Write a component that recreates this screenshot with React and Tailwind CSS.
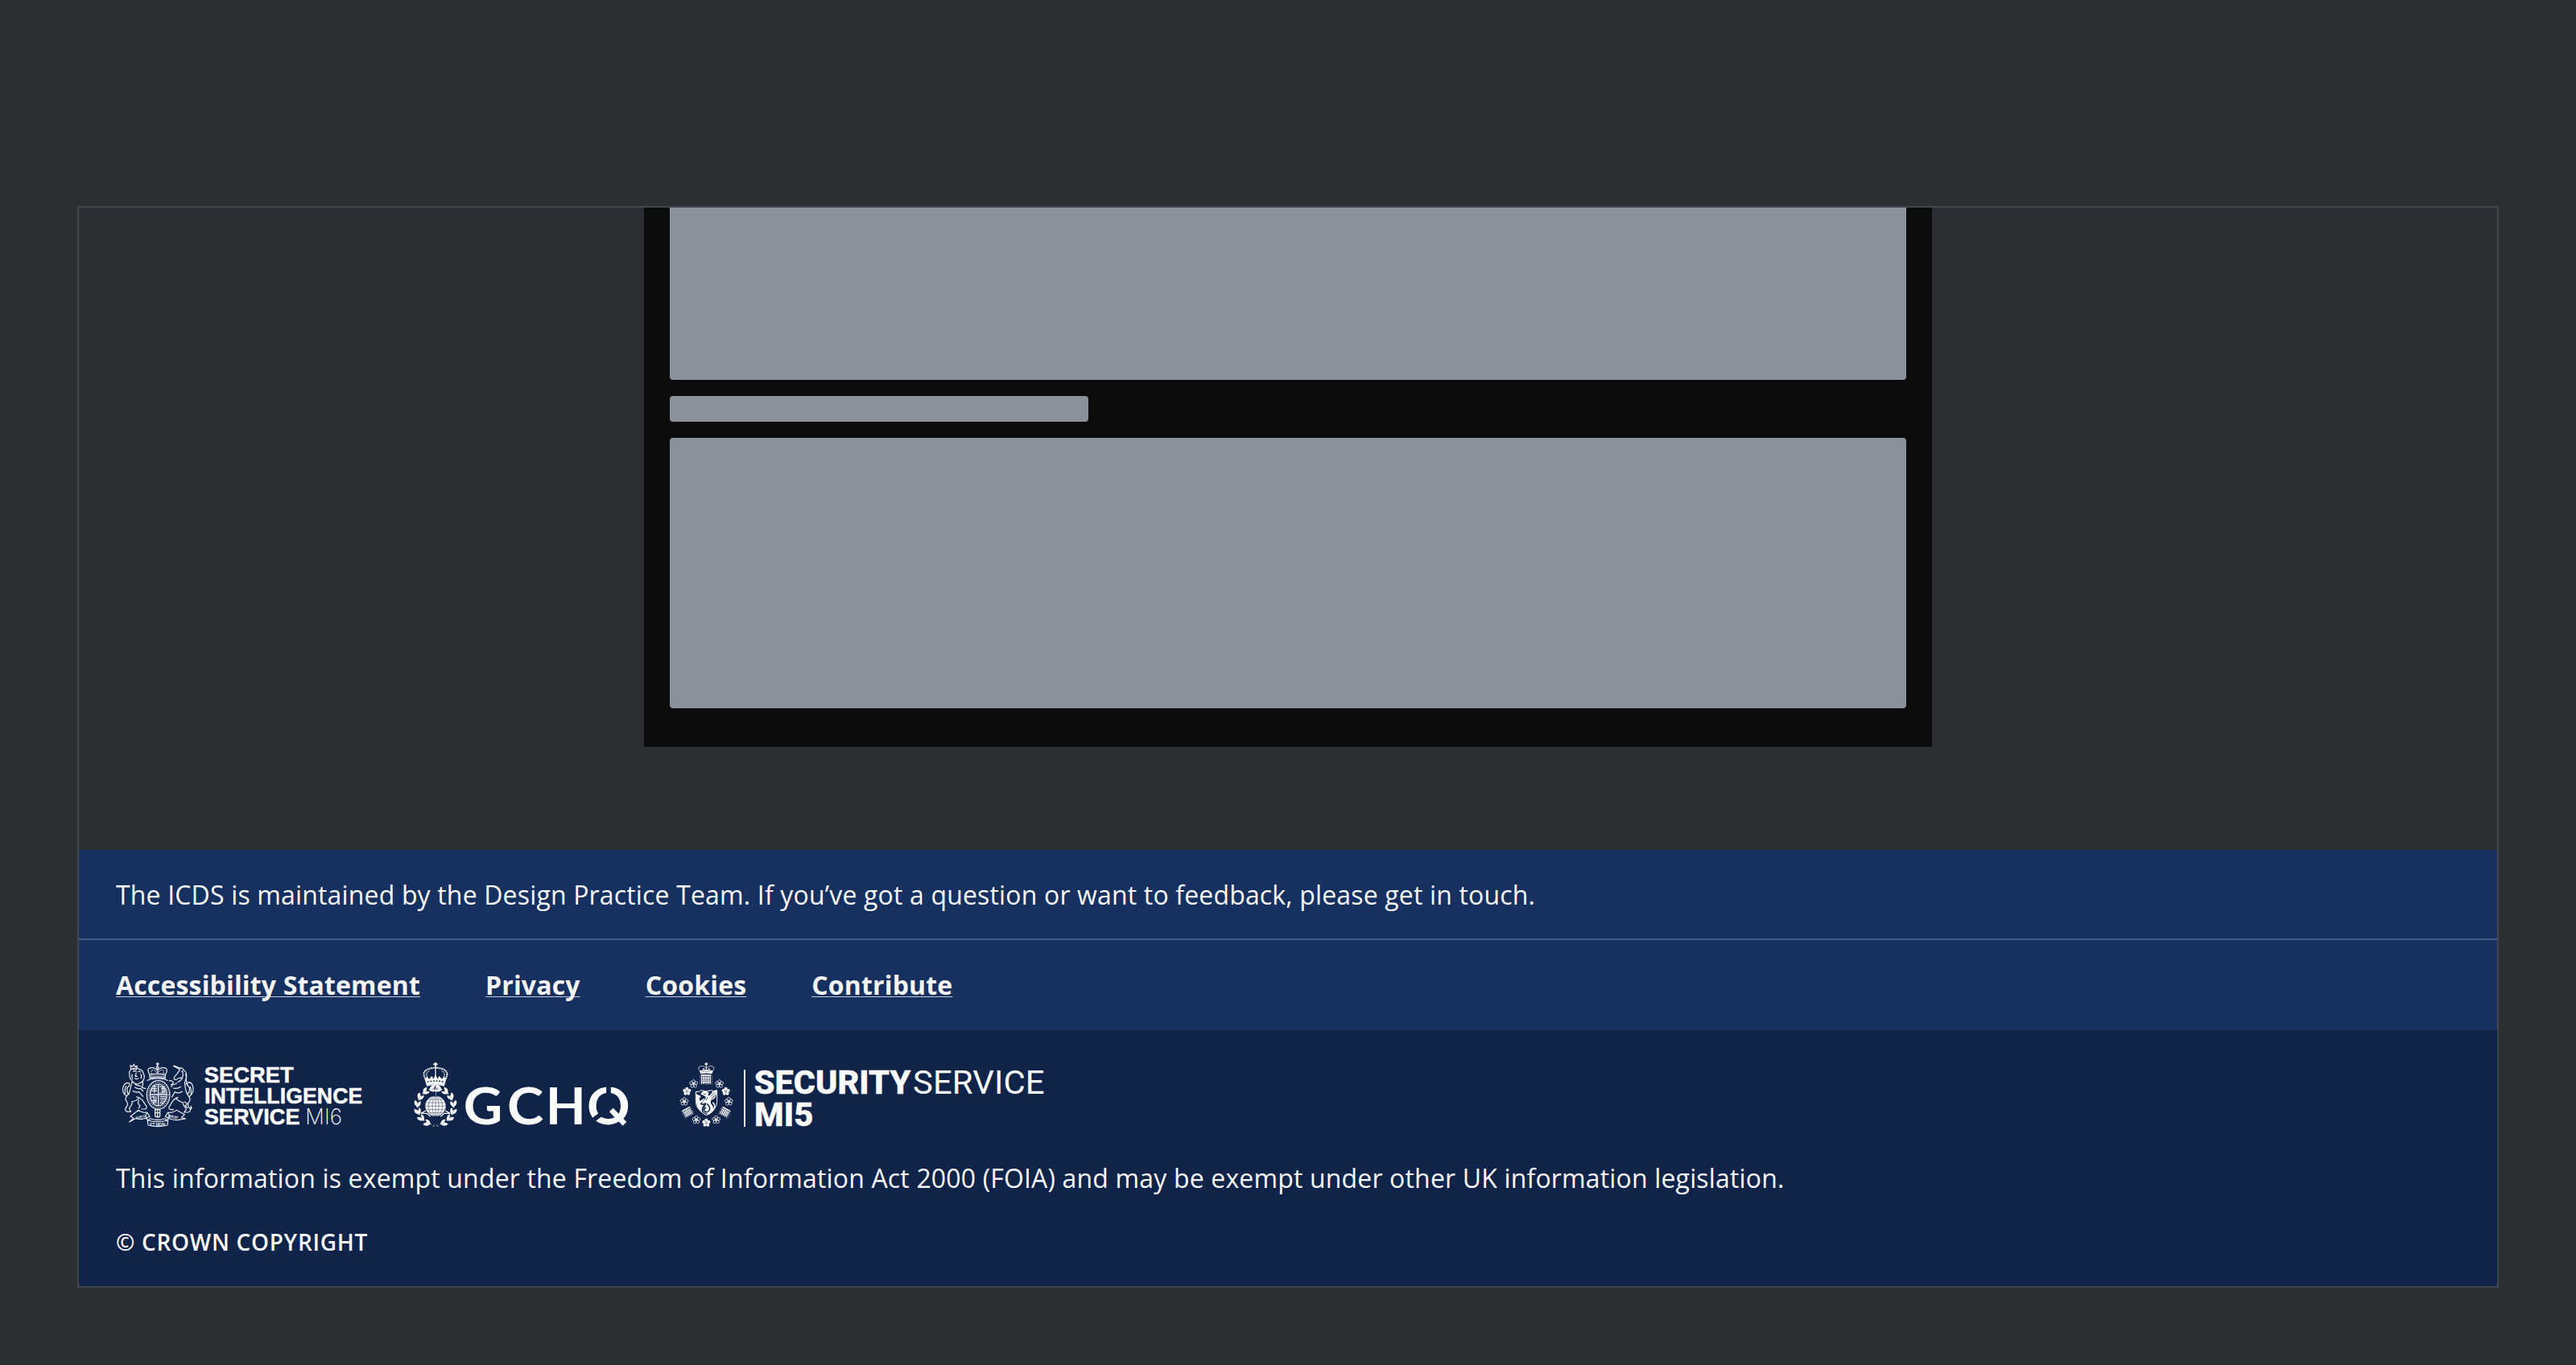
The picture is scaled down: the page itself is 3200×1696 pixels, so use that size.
import React from "react";

const INK = "#fbfcfc";
const NAVY = "#102349";

const LINKS = ["Accessibility Statement", "Privacy", "Cookies", "Contribute"];

/* Left supporter and its scroll of the royal arms; the lion faces the shield. */
function Lion() {
  return (
    <g>
      <path d="M98 84 L96 71 L103 76 L109 67 L113 76 L121 73 L118 87 Z" />
      <path d="M98 86 q-8 8 -5 20 q-2 12 8 20 q2 10 12 12 q10 8 18 -2 q12 -2 14 -12 q6 -12 0 -20 q-2 -14 -14 -18 q-16 -10 -33 0 Z" />
      <path d="M105 95 q8 -6 14 0 M124 95 q6 -4 10 2 M118 98 l-4 14 h9 M112 119 q8 6 15 -1 M103 104 q-4 10 2 18 M134 103 q6 8 1 18" />
      <path d="M104 130 q-6 12 -8 28 q-2 16 -14 28 q-8 10 0 20 q8 10 -2 22 q-8 10 4 16 h14 q-6 -8 -6 -14 q12 -12 10 -24 q18 -2 26 -14" />
      <path d="M112 140 q12 10 24 8 M140 128 q6 14 -2 26 l16 4 M112 152 q12 8 22 6 l10 10 M104 166 q12 8 24 4 l16 18 M118 188 q14 4 22 12 l16 24 q2 10 -8 10 h-12 M128 200 q-8 12 4 22 l-6 10" />
      <path d="M84 186 q-18 -8 -16 -28 q2 -18 16 -22 q12 0 8 12 q-10 2 -8 16 q0 12 8 16 M76 178 q-2 -16 4 -30" />
    </g>
  );
}

function Unicorn() {
  return (
    <g>
      <path d="M255 73 L280 86 M258 72 L283 82" />
      <path d="M281 82 q10 -4 12 6 q12 6 12 22 q0 14 -6 24 M281 84 q-4 10 -12 20 q-12 12 -10 18 q8 6 14 -2 q10 -4 18 -2 M284 94 h3 M290 90 q4 16 0 28 q-6 12 -18 16" />
      <path d="M298 134 q2 16 4 28 q4 16 12 26 q8 10 0 20 q-8 10 2 22 q8 10 -4 16 h-16 q8 -6 8 -14 q-12 -10 -12 -22 q-14 -4 -26 -14" />
      <path d="M300 104 q8 10 2 20 q8 10 0 18 M270 136 q-10 10 -24 6 M240 130 q8 -6 16 4 l-8 18 M284 150 q-12 10 -30 6 M290 168 q-14 10 -28 2 l-12 20 M274 190 q-14 4 -20 14 l-14 22 q-2 10 8 10 h10" />
      <path d="M314 188 q18 -12 16 -32 q-2 -18 -14 -22 q-10 2 -8 12 q10 4 8 18 q0 10 -8 14 M322 180 q2 -16 -3 -30" />
      <path d="M296 206 l12 8 l-8 8 l10 8 M322 222 v14 M316 230 h10" />
    </g>
  );
}

function MI6Logo() {
  return (
    <svg className="h-20 w-[308px] overflow-visible" viewBox="42 60 924 240" aria-label="Secret Intelligence Service MI6">
      <g fill="none" stroke="#e9edf2" strokeWidth="3.6" strokeLinejoin="round">
        <Lion />
        <Unicorn />
        {/* crown */}
        <g>
          <path d="M197 60 v14 M191 66 h12" strokeWidth="4" />
          <circle cx="197" cy="78" r="4" />
          <path d="M168 106 q-14 -22 4 -26 q16 -2 25 10 q9 -12 25 -10 q18 4 4 26" />
          <path d="M176 104 q-6 -14 4 -16 q12 2 17 14 q5 -12 17 -14 q10 2 4 16 M197 84 v20" strokeDasharray="4 3" />
          <path d="M168 106 q29 -8 58 0 v14 q-29 -7 -58 0 Z" fill="#e6eaf0" fillOpacity=".3" />
          <path d="M172 114 h50" strokeDasharray="5 4" />
          <path d="M158 128 q14 -8 39 -8 q25 0 39 8" />
        </g>
        {/* garter and quartered shield */}
        <ellipse cx="200" cy="181" rx="43" ry="53" />
        <ellipse cx="200" cy="181" rx="37" ry="46" strokeWidth="5" strokeDasharray="3 5" opacity=".75" />
        <ellipse cx="200" cy="181" rx="31" ry="40" fill="#e6eaf0" fillOpacity=".15" />
        <path d="M200 141 v80 M169 180 h62" strokeWidth="4" />
        <path d="M175 158 h20 M174 166 h21 M178 150 h17 M186 146 v28 M205 150 l18 2 v22 h-18 M210 158 h12 M212 168 h10 M216 150 v24" />
        <path d="M174 190 q10 -6 10 6 t10 8 M184 186 v28 M176 202 h18 M191 186 v28 M207 188 h20 M207 196 h20 M208 204 h16 M206 211 h12" />
        <path d="M188 236 h18 v24 q-9 8 -18 0 Z M188 248 h18 M197 238 v24" strokeWidth="4" />
        {/* motto scroll */}
        <path d="M92 282 L108 268 L96 262 L126 238 Q140 250 158 246 L168 262 Q140 278 118 268 Z" />
        <path d="M302 270 L286 266 L298 254 L268 238 Q254 250 236 246 L226 262 Q252 278 276 274 Z" />
        <path d="M158 248 q-10 12 0 24 q8 6 12 -4 M236 248 q10 12 0 24 q-8 6 -12 -4" />
        <path d="M160 276 q37 10 76 0 l-2 18 q-37 10 -72 0 Z M170 270 q28 8 54 0" />
      </g>
      <g fill="#e6eaf0" fontFamily="Liberation Sans, sans-serif" fontWeight="700">
        <text x="168" y="296" fontSize="16" textLength="58">ET MON</text>
        <text x="118" y="272" fontSize="14" textLength="36" transform="rotate(-14 118 272)">DIEU</text>
        <text x="236" y="264" fontSize="14" textLength="38" transform="rotate(12 236 264)">DROIT</text>
      </g>
      <g fill={INK} stroke={INK} strokeWidth="1.5" fontFamily="Liberation Sans, Arial, sans-serif" fontWeight="700" fontSize="82">
        <text x="371" y="134" textLength="333" lengthAdjust="spacingAndGlyphs">SECRET</text>
        <text x="372" y="213" textLength="589" lengthAdjust="spacingAndGlyphs">INTELLIGENCE</text>
        <text x="371" y="290" textLength="357" lengthAdjust="spacingAndGlyphs">SERVICE</text>
      </g>
      <text x="748" y="290" fill={INK} fontFamily="Inter, sans-serif" fontWeight="200" fontSize="80" textLength="137" lengthAdjust="spacingAndGlyphs">MI6</text>
    </svg>
  );
}

const LEAF_ANGLES = [12, 36, 60, 84, 108, 132, 156];

function GCHQLogo() {
  return (
    <svg className="h-20 w-[272px] overflow-visible" viewBox="66 60 816 240" aria-label="GCHQ">
      {/* imperial crown */}
      <g fill="none" stroke={INK} strokeWidth="4">
        <path d="M153 60 v16 M145 67 h16" strokeWidth="6" />
        <path d="M153 76 v40" strokeWidth="5" strokeDasharray="4 2" />
        <path d="M116 122 q-16 -26 8 -36 q14 -6 29 -6 q15 0 29 6 q24 10 8 36" strokeWidth="6" strokeDasharray="5 2" />
        <path d="M122 116 q-8 -18 8 -24 M184 116 q8 -18 -8 -24" strokeWidth="2.5" />
        <path d="M114 122 l8 -8 l7 10 l10 -12 l6 12 l8 -16 l8 16 l6 -12 l10 12 l7 -10 l8 8 l-6 22 q-33 -8 -66 0 Z" fill={INK} strokeWidth="2" />
        <path d="M122 133 q31 -8 62 0" stroke={NAVY} strokeWidth="4" strokeDasharray="6 5" />
        <path d="M120 147 q33 -8 66 0" strokeWidth="4" />
      </g>
      {/* laurel wreath */}
      {[1, -1].map((side) => (
        <g key={side} transform={`translate(153 225) scale(${side} 1)`} fill={INK}>
          {LEAF_ANGLES.map((a) => (
            <g key={a} transform={`rotate(${a}) translate(0 -67) scale(1.2)`}>
              <path d="M7 -1 Q-2 -16 -14 -9 Q-8 2 7 -1 Z" />
              <path d="M9 0 Q-2 -3 -13 7 Q-2 14 9 0 Z" />
              <path d="M10 0 L-8 0" stroke={INK} strokeWidth="2" />
            </g>
          ))}
          <path d="M2 66 l10 8 l-6 -1 Z" />
        </g>
      ))}
      {/* lightning and globe */}
      <path d="M155 150 l-6 18 l6 -3 l-3 24 l7 -28 l-6 3 l6 -14 Z" fill={INK} />
      <path d="M117 240 L98 250 L120 250 L134 262 M189 240 L208 250 L186 250 L172 262" fill="none" stroke={INK} strokeWidth="4" />
      <circle cx="153" cy="223" r="38" fill={INK} />
      <g fill="none" stroke={NAVY} strokeWidth="2" opacity=".7">
        <ellipse cx="153" cy="223" rx="12" ry="37" />
        <ellipse cx="153" cy="223" rx="26" ry="37" />
        <path d="M153 186 v74 M116 223 h74 M119 210 h68 M126 198 h54 M119 236 h68 M126 248 h54" />
      </g>
      <g fill={INK} fontFamily="Lato, sans-serif" fontWeight="700" fontSize="192">
        <text x="257" y="291" textLength="146" lengthAdjust="spacingAndGlyphs">G</text>
        <text x="420" y="291" textLength="136" lengthAdjust="spacingAndGlyphs">C</text>
        <text x="564" y="291" textLength="149" lengthAdjust="spacingAndGlyphs">H</text>
        <text x="717" y="291" textLength="161" lengthAdjust="spacingAndGlyphs">Q</text>
      </g>
      {/* breaks in the Q ring and its straight tail */}
      <path d="M762 294 Q798 300 834 282 L884 258 V336 H762 Z" fill={NAVY} />
      <path d="M798 144 V182 M728 284 L772 252" stroke={NAVY} strokeWidth="17" />
      <path d="M808 237 L858 289" stroke={INK} strokeWidth="20" />
    </svg>
  );
}

function Rose({ x, y, solid }) {
  return (
    <g transform={`translate(${x} ${y})`}>
      {[0, 72, 144, 216, 288].map((a) => (
        <circle
          key={a}
          cx="0"
          cy="-9.5"
          r={solid ? 6 : 5.5}
          transform={`rotate(${a})`}
          fill={solid ? INK : "none"}
          stroke={INK}
          strokeWidth={solid ? 0 : 2.2}
        />
      ))}
      <circle r={solid ? 3 : 4} fill={INK} />
    </g>
  );
}

function Portcullis({ x, y, angle = 0, scale = 1 }) {
  return (
    <g transform={`translate(${x} ${y}) rotate(${angle}) scale(${scale})`} fill="none" stroke={INK} strokeWidth="3.4">
      <path d="M-19 -16 H19" strokeWidth="5" />
      <path d="M-16 -16 V18 M-8 -16 V18 M0 -16 V18 M8 -16 V18 M16 -16 V18 M-17 -6 H17 M-17 2 H17 M-17 10 H17" />
      <path d="M-22 -14 V18 M22 -14 V18" strokeWidth="2" strokeDasharray="3 3" />
    </g>
  );
}

function MI5Logo() {
  return (
    <svg className="h-20 w-[454px] overflow-visible" viewBox="72 60 1362 240" aria-label="Security Service MI5">
      <g fill="none" stroke={INK} strokeWidth="3">
        <path d="M172 60 v13 M166 66 h12" strokeWidth="4" />
        <path d="M150 94 q-14 -16 2 -20 q12 -2 20 8 q8 -10 20 -8 q16 4 2 20" strokeDasharray="5 1.5" />
        <path d="M172 74 v18 M158 88 l4 -6 l4 8 M186 88 l-4 -6 l-4 8" />
        <path d="M149 92 q23 -6 46 0 l-2 9 q-21 -4 -42 0 Z" fill={INK} />
        <path d="M154 96 q18 -4 36 0" stroke={NAVY} strokeWidth="2" strokeDasharray="4 3" />
      </g>
      <Portcullis x={171} y={124} />
      <Rose x={125} y={140} />
      <Rose x={221} y={140} />
      <Rose x={100} y={168} solid />
      <Rose x={245} y={168} solid />
      <Rose x={90} y={206} />
      <Rose x={256} y={206} />
      <Portcullis x={103} y={246} angle={-28} scale={0.85} />
      <Portcullis x={241} y={246} angle={28} scale={0.85} />
      <Rose x={135} y={274} />
      <Rose x={209} y={274} />
      <Rose x={172} y={285} solid />
      {/* shield with winged sea lion */}
      <path d="M133 170 Q146 172 152 164 Q172 172 190 164 Q200 170 212 164 V206 Q212 236 172 257 Q133 236 133 206 Z" fill="none" stroke={INK} strokeWidth="3" />
      <path d="M135 178 l18 8 q-8 6 -6 16 l14 4 l-12 8 q4 8 14 4 q-14 16 -4 30 q4 6 12 8 Q136 236 135 206 Z" fill={INK} />
      <path d="M150 178 q8 -14 22 -10 l10 4 l-4 12 q12 -2 16 -14 l16 -8 q2 22 -8 34 l-12 4 q-4 12 4 20 q10 16 -4 28 q-16 10 -28 -4 q-4 -12 6 -20 q6 -8 2 -14 l-14 6 l4 -10 l-10 -2 l10 -8 l10 -2 l-2 -8 Z" fill={INK} />
      <path d="M190 186 l14 -14 M192 194 l14 -12 M196 200 l12 -8 M162 178 h8 M176 190 l-4 12 M168 196 l-8 6" stroke={NAVY} strokeWidth="2.5" />
      <path d="M174 214 q14 10 10 24 q-8 12 -18 4 q-6 -10 6 -14" fill="none" stroke={NAVY} strokeWidth="4.5" />
      <path d="M196 210 q10 6 6 22 q-10 16 -26 22" fill="none" stroke={INK} strokeWidth="5" />
      <rect x="312" y="88" width="6" height="212" fill={INK} />
      <g fill={INK} fontFamily="Roboto, sans-serif" fontSize="120">
        <text x="350" y="177" fontWeight="800" stroke={INK} strokeWidth="1.5" textLength="584" lengthAdjust="spacingAndGlyphs">SECURITY</text>
        <text x="942" y="177" fontWeight="400" textLength="491" lengthAdjust="spacingAndGlyphs">SERVICE</text>
        <text x="351" y="297" fontWeight="800" stroke={INK} strokeWidth="1.5" textLength="220" lengthAdjust="spacingAndGlyphs">MI5</text>
      </g>
    </svg>
  );
}

function Footer() {
  return (
    <footer className="text-[32px] leading-[48px] tracking-[0.16px] text-[#f8f9fa]">
      <div className="flex h-28 items-center border-b-2 border-[#455a82] bg-[#16305f] px-[46px] pt-0.5">
        <p>The ICDS is maintained by the Design Practice Team. If you’ve got a question or want to feedback, please get in touch.</p>
      </div>
      <nav className="flex h-28 items-center gap-[81px] bg-[#16305f] px-[46px] font-bold text-[#f4f4f5]">
        {LINKS.map((label) => (
          <a key={label} href="#" className="underline decoration-[#c3c8d2] decoration-1 underline-offset-[2px] [text-decoration-skip-ink:none]">
            {label}
          </a>
        ))}
      </nav>
      <div className="flex h-[318px] flex-col bg-[#102349] px-[46px] pt-10">
        <div className="flex items-center gap-[60px]">
          <MI6Logo />
          <GCHQLogo />
          <MI5Logo />
        </div>
        <p className="mt-10">
          This information is exempt under the Freedom of Information Act 2000 (FOIA) and may be exempt under other UK information legislation.
        </p>
        <p className="mt-8 text-[28px] leading-[46px] font-semibold tracking-[0.7px]">© CROWN COPYRIGHT</p>
      </div>
    </footer>
  );
}

export default function App() {
  return (
    <div className="h-[1696px] w-[3200px] bg-[#2c2f34] px-24 pt-64 font-['Open_Sans',sans-serif]">
      <div className="flex h-[1344px] flex-col justify-between overflow-hidden border-2 border-[#41464d]">
        <main className="mx-auto flex h-[670px] w-[1600px] flex-col gap-5 bg-[#0b0d0c] px-8">
          <div className="h-[214px] rounded-b bg-[#8b919b]" />
          <div className="h-8 w-[520px] rounded bg-[#8b919b]" />
          <div className="h-[336px] rounded bg-[#8b919b]" />
        </main>
        <Footer />
      </div>
    </div>
  );
}
